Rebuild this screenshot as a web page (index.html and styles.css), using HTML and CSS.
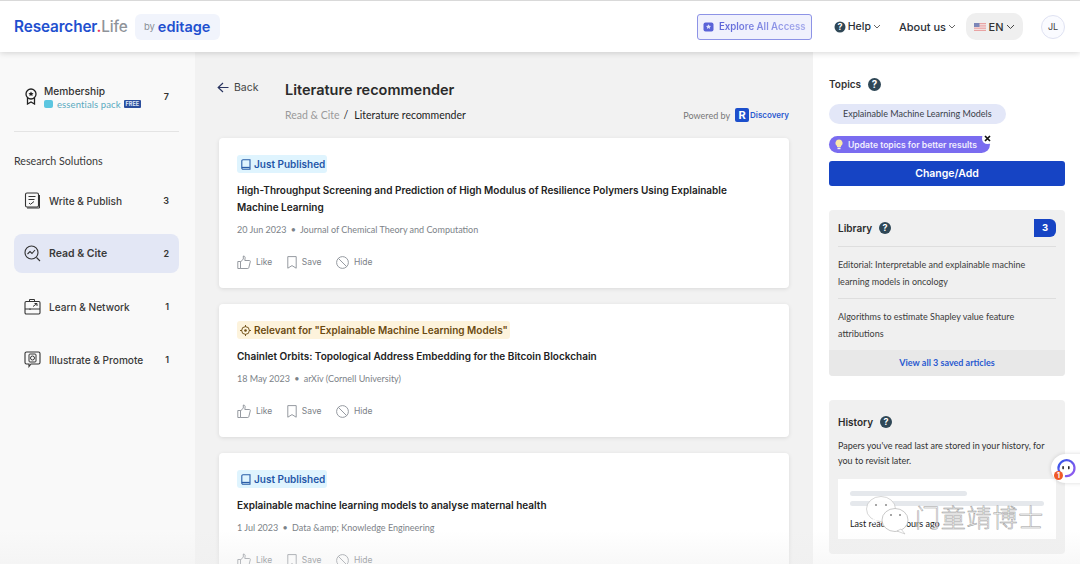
FILE: index.html
```html
<!DOCTYPE html>
<html lang="en">
<head>
<meta charset="utf-8">
<title>Literature recommender</title>
<link rel="stylesheet" href="styles.css">
</head>
<body>
<header class="topbar">
  <div class="brand">
    <span class="logo"><span class="logo-a">Researcher</span><span class="logo-dot">.</span><span class="logo-b">Life</span></span>
    <span class="by-box"><span class="by">by</span><span class="editage">editage</span></span>
  </div>
  <nav class="topnav">
    <a class="explore">
      <svg width="11" height="11" viewBox="0 0 11 11"><rect x="0.5" y="1.500" width="10" height="9" rx="2" fill="#5a63d8"/><path d="M5.500 3.200l.8 1.600 1.700.2-1.200 1.200.3 1.700-1.600-.8-1.600.8.3-1.700L3 5l1.700-.2z" fill="#dfe2fb"/></svg>
      <span class="explore-text">Explore All Access</span>
    </a>
    <a class="navlink help">
      <svg width="12" height="12" viewBox="0 0 12 12"><circle cx="6" cy="6" r="5.500" fill="#2f4756"/><text x="6" y="9" text-anchor="middle" class="qmark">?</text></svg>
      <span>Help</span>
      <svg class="chev" width="8" height="5" viewBox="0 0 8 5"><path d="M1 1l3 3 3-3" fill="none" stroke="#555" stroke-width="0.9"/></svg>
    </a>
    <a class="navlink about">
      <span>About us</span>
      <svg class="chev" width="8" height="5" viewBox="0 0 8 5"><path d="M1 1l3 3 3-3" fill="none" stroke="#555" stroke-width="0.9"/></svg>
    </a>
    <a class="lang">
      <svg width="12" height="8" viewBox="0 0 12 8"><rect width="12" height="8" fill="#e9a3a3"/><rect y="1.200" width="12" height="1.100" fill="#f4e6e6"/><rect y="3.500" width="12" height="1.100" fill="#f4e6e6"/><rect y="5.800" width="12" height="1.100" fill="#f4e6e6"/><rect width="5.500" height="4" fill="#7b86b8"/></svg>
      <span>EN</span>
      <svg width="9" height="6" viewBox="0 0 9 6"><path d="M1 1l3.500 3.500L8 1" fill="none" stroke="#444" stroke-width="1"/></svg>
    </a>
    <span class="avatar">JL</span>
  </nav>
</header>

<div class="page">
  <aside class="sidebar">
    <div class="member">
      <svg class="member-icon" width="14" height="17" viewBox="0 0 14 17"><circle cx="7" cy="6" r="5" fill="none" stroke="#222" stroke-width="1.300"/><path d="M7 3.400l.8 1.600 1.700.2-1.200 1.200.3 1.700L7 7.300l-1.600.8.3-1.700L4.500 5.200l1.700-.2z" fill="#222"/><path d="M3.500 10v6l3.500-2 3.500 2v-6" fill="none" stroke="#222" stroke-width="1.300"/></svg>
      <div class="member-text">
        <div class="member-name">Membership</div>
        <div class="member-pack"><span class="pack-dot"></span><span class="pack-name">essentials pack</span><span class="free">FREE</span></div>
      </div>
      <span class="count">7</span>
    </div>
    <div class="side-title">Research Solutions</div>
    <ul class="side-nav">
      <li class="side-item">
        <svg width="17" height="17" viewBox="0 0 17 17"><rect x="1.500" y="1" width="13" height="14" rx="1.500" fill="none" stroke="#333" stroke-width="1.100"/><path d="M15.500 3v13H3" fill="none" stroke="#333" stroke-width="1"/><path d="M4.500 4.500h7M4.500 7.500h6M5 11l1.500 1.300L10 9.500" fill="none" stroke="#333"/></svg>
        <span class="side-label">Write &amp; Publish</span><span class="count">3</span>
      </li>
      <li class="side-item active">
        <svg width="17" height="17" viewBox="0 0 17 17"><circle cx="7.500" cy="7.500" r="6.500" fill="none" stroke="#333" stroke-width="1.100"/><path d="M12.500 12.500l3.500 3.500" stroke="#333" stroke-width="1.100"/><path d="M3.500 9l2.500-2.500L8 8.500l3-3.500" fill="none" stroke="#333" stroke-width="1.100"/></svg>
        <span class="side-label">Read &amp; Cite</span><span class="count">2</span>
      </li>
      <li class="side-item">
        <svg width="17" height="17" viewBox="0 0 17 17"><rect x="1" y="3.500" width="15" height="12.500" rx="1.200" fill="none" stroke="#333" stroke-width="1.100"/><path d="M5.500 3.500V1.500h5v2M1 11h15M9 8.500l4-3M10.500 5.500H13V8M6 10.500v1.500" fill="none" stroke="#333"/></svg>
        <span class="side-label">Learn &amp; Network</span><span class="count">1</span>
      </li>
      <li class="side-item">
        <svg width="17" height="17" viewBox="0 0 17 17"><path d="M2.500 1h12A1.500 1.500 0 0 1 16 2.500v9a1.500 1.500 0 0 1-1.500 1.500H7l-2 2.500V13H2.500A1.500 1.500 0 0 1 1 11.500v-9A1.500 1.500 0 0 1 2.500 1z" fill="none" stroke="#333" stroke-width="1.100"/><rect x="5" y="3" width="7" height="8" rx="1" fill="none" stroke="#333"/><circle cx="8.500" cy="7" r="2" fill="none" stroke="#333"/></svg>
        <span class="side-label">Illustrate &amp; Promote</span><span class="count">1</span>
      </li>
    </ul>
  </aside>

  <main class="main">
    <div class="main-head">
      <a class="back">
        <svg width="12" height="11" viewBox="0 0 12 11"><path d="M6 1L1.200 5.500 6 10M1.200 5.500H11.500" fill="none" stroke="#2a3560" stroke-width="1.200"/></svg>
        <span>Back</span>
      </a>
      <div class="title-block">
        <h1>Literature recommender</h1>
        <div class="crumbs"><span class="crumb-a">Read &amp; Cite</span><span class="crumb-s">/</span><span class="crumb-b">Literature recommender</span></div>
      </div>
      <div class="powered">
        <span>Powered by</span>
        <span class="r-badge">R</span>
        <span class="disc">Discovery</span>
      </div>
    </div>

    <article class="card">
      <span class="tag tag-blue">
        <svg width="10" height="11" viewBox="0 0 10 11"><path d="M2 .8h7v9.400H2A1.200 1.200 0 0 1 .8 9V2A1.200 1.200 0 0 1 2 .8z" fill="#dff4fe" stroke="#2a5da8" stroke-width="1.100"/><path d="M.8 8.500h8" stroke="#2a5da8" stroke-width="1.300"/></svg>
        Just Published
      </span>
      <h2>High-Throughput Screening and Prediction of High Modulus of Resilience Polymers Using Explainable Machine Learning</h2>
      <p class="meta">20 Jun 2023 <i>•</i> Journal of Chemical Theory and Computation</p>
      <div class="actions">
        <span class="act"><svg width="14" height="14" viewBox="0 0 14 14"><path d="M.8 6.500h2.700v7H.8zM3.500 7l2.800-3V1c1.400 0 2 1 1.800 2.200L7.800 5.500h4.700c.7 0 1 .6.800 1.200l-1.500 6c-.1.500-.5.800-1 .8H3.500" fill="none" stroke="#8a8f96" stroke-width=".9"/></svg>Like</span>
        <span class="act"><svg width="10" height="13" viewBox="0 0 10 13"><path d="M.8.600h8.400v11.600L5 9.600.8 12.200z" fill="none" stroke="#8a8f96" stroke-width=".9"/></svg>Save</span>
        <span class="act"><svg width="13" height="13" viewBox="0 0 13 13"><circle cx="6.500" cy="6.500" r="5.900" fill="none" stroke="#8a8f96" stroke-width=".9"/><path d="M2.400 2.400l8.200 8.200" stroke="#8a8f96" stroke-width=".9"/></svg>Hide</span>
      </div>
    </article>

    <article class="card">
      <span class="tag tag-amber">
        <svg width="11" height="11" viewBox="0 0 12 12"><circle cx="6" cy="6" r="4.200" fill="none" stroke="#6b4a10"/><circle cx="6" cy="6" r="1.400" fill="#6b4a10"/><path d="M6 0v2M6 10v2M0 6h2M10 6h2" stroke="#6b4a10"/></svg>
        Relevant for "Explainable Machine Learning Models"
      </span>
      <h2>Chainlet Orbits: Topological Address Embedding for the Bitcoin Blockchain</h2>
      <p class="meta">18 May 2023 <i>•</i> arXiv (Cornell University)</p>
      <div class="actions">
        <span class="act"><svg width="14" height="14" viewBox="0 0 14 14"><path d="M.8 6.500h2.700v7H.8zM3.500 7l2.800-3V1c1.400 0 2 1 1.800 2.200L7.800 5.500h4.700c.7 0 1 .6.800 1.200l-1.500 6c-.1.500-.5.800-1 .8H3.500" fill="none" stroke="#8a8f96" stroke-width=".9"/></svg>Like</span>
        <span class="act"><svg width="10" height="13" viewBox="0 0 10 13"><path d="M.8.600h8.400v11.600L5 9.600.8 12.200z" fill="none" stroke="#8a8f96" stroke-width=".9"/></svg>Save</span>
        <span class="act"><svg width="13" height="13" viewBox="0 0 13 13"><circle cx="6.500" cy="6.500" r="5.900" fill="none" stroke="#8a8f96" stroke-width=".9"/><path d="M2.400 2.400l8.200 8.200" stroke="#8a8f96" stroke-width=".9"/></svg>Hide</span>
      </div>
    </article>

    <article class="card">
      <span class="tag tag-blue">
        <svg width="10" height="11" viewBox="0 0 10 11"><path d="M2 .8h7v9.400H2A1.200 1.200 0 0 1 .8 9V2A1.200 1.200 0 0 1 2 .8z" fill="#dff4fe" stroke="#2a5da8" stroke-width="1.100"/><path d="M.8 8.500h8" stroke="#2a5da8" stroke-width="1.300"/></svg>
        Just Published
      </span>
      <h2>Explainable machine learning models to analyse maternal health</h2>
      <p class="meta">1 Jul 2023 <i>•</i> Data &amp;amp; Knowledge Engineering</p>
      <div class="actions">
        <span class="act"><svg width="14" height="14" viewBox="0 0 14 14"><path d="M.8 6.500h2.700v7H.8zM3.500 7l2.800-3V1c1.400 0 2 1 1.800 2.200L7.800 5.500h4.700c.7 0 1 .6.800 1.200l-1.500 6c-.1.500-.5.800-1 .8H3.500" fill="none" stroke="#8a8f96" stroke-width=".9"/></svg>Like</span>
        <span class="act"><svg width="10" height="13" viewBox="0 0 10 13"><path d="M.8.600h8.400v11.600L5 9.600.8 12.200z" fill="none" stroke="#8a8f96" stroke-width=".9"/></svg>Save</span>
        <span class="act"><svg width="13" height="13" viewBox="0 0 13 13"><circle cx="6.500" cy="6.500" r="5.900" fill="none" stroke="#8a8f96" stroke-width=".9"/><path d="M2.400 2.400l8.200 8.200" stroke="#8a8f96" stroke-width=".9"/></svg>Hide</span>
      </div>
    </article>
  </main>

  <aside class="rail">
    <div class="rail-title">Topics <svg width="13" height="13" viewBox="0 0 12 12"><circle cx="6" cy="6" r="6" fill="#2f4756"/><text x="6" y="9" text-anchor="middle" class="qmark">?</text></svg></div>
    <span class="topic">Explainable Machine Learning Models</span>
    <span class="hint">
      <svg width="8" height="11" viewBox="0 0 8 11"><path d="M4 .5a3.500 3.500 0 0 1 2 6.400V8H2V6.900A3.500 3.500 0 0 1 4 .5z" fill="#fbe9a8"/><rect x="2.500" y="8.600" width="3" height="1.600" fill="#f2f2f2"/></svg>
      Update topics for better results
      <span class="hint-x"><svg width="7" height="7" viewBox="0 0 7 7"><path d="M1 1l5 5M6 1L1 6" stroke="#111" stroke-width="1.700"/></svg></span>
    </span>
    <button class="change">Change/Add</button>

    <section class="panel library">
      <div class="panel-head"><span class="panel-title">Library</span>
        <svg width="12" height="12" viewBox="0 0 12 12"><circle cx="6" cy="6" r="6" fill="#2f4756"/><text x="6" y="9" text-anchor="middle" class="qmark">?</text></svg>
        <span class="lib-count">3</span>
      </div>
      <p class="lib-item">Editorial: Interpretable and explainable machine learning models in oncology</p>
      <p class="lib-item">Algorithms to estimate Shapley value feature attributions</p>
      <a class="view-all">View all 3 saved articles</a>
    </section>

    <section class="panel history">
      <div class="panel-head"><span class="panel-title">History</span>
        <svg width="12" height="12" viewBox="0 0 12 12"><circle cx="6" cy="6" r="6" fill="#2f4756"/><text x="6" y="9" text-anchor="middle" class="qmark">?</text></svg>
      </div>
      <p class="hist-text">Papers you've read last are stored in your history, for you to revisit later.</p>
      <div class="hist-box">
        <span class="bar bar-short"></span>
        <span class="bar"></span>
        <span class="last">Last read 10 hours ago</span>
      </div>
    </section>
  </aside>
</div>

<div class="chat-fab">
  <svg width="20" height="20" viewBox="0 0 20 20"><defs><linearGradient id="ring" x1="0" y1="0" x2="1" y2="1"><stop offset="0" stop-color="#2f55e8"/><stop offset="1" stop-color="#9a5cf0"/></linearGradient></defs><path d="M3.500 14A8 8 0 1 1 9 18" fill="none" stroke="url(#ring)" stroke-width="2.200"/><rect x="6.300" y="8" width="1.600" height="3.400" rx=".8" fill="#222"/><rect x="12" y="8" width="1.600" height="3.400" rx=".8" fill="#222"/></svg>
  <span class="chat-badge">1</span>
</div>

<div class="watermark">
  <svg width="44" height="40" viewBox="0 0 44 40"><ellipse cx="15" cy="13" rx="14.500" ry="12.500" fill="#fff" fill-opacity=".9" stroke="#bbb" stroke-width=".6"/><path d="M7 23l-2 5 7-3z" fill="#fff"/><ellipse cx="29" cy="24" rx="13" ry="11.500" fill="#fff" stroke="#bbb" stroke-width=".8"/><path d="M35 33l4 5-8-3z" fill="#fff" stroke="#bbb" stroke-width=".6"/><circle cx="10" cy="9" r="1" fill="#888"/><circle cx="20" cy="9" r="1" fill="#888"/><circle cx="25" cy="19" r="1" fill="#888"/><circle cx="34" cy="19" r="1" fill="#888"/></svg>
  <span class="wm-text">门童靖博士</span>
</div>
<div class="fade"></div>
</body>
</html>
```
FILE: styles.css
```css
* { box-sizing: border-box; }
html, body { margin: 0; padding: 0; }
body {
  width: 1080px;
  height: 564px;
  overflow: hidden;
  position: relative;
  font-family: "Lato", "Liberation Sans", sans-serif;
  color: #222;
  background: #f2f2f2;
  display: flex;
  flex-direction: column;
}
h1, h2, p, ul { margin: 0; padding: 0; }
ul { list-style: none; }
.qmark { font: 700 9px "Inter", sans-serif; fill: #fff; }

.topbar {
  height: 52px;
  flex: none;
  background: #fff;
  border-top: 1px solid #d9d9d9;
  box-shadow: 0 1px 6px rgba(0,0,0,.16);
  display: flex;
  justify-content: space-between;
  align-items: center;
  padding: 0 15px 0 14px;
  position: relative;
  z-index: 2;
}
.brand { display: flex; align-items: center; gap: 7px; }
.logo { font: 600 15.300px "Inter", sans-serif; letter-spacing: -.1px; }
.logo-a { color: #1f50cf; }
.logo-dot { color: #e8365d; }
.logo-b { color: #8f9399; font-weight: 500; }
.by-box {
  width: 85px; height: 26px; border-radius: 6px; background: #f1f4fc;
  display: flex; align-items: center; justify-content: center; gap: 3px;
}
.by { font: 400 9.500px "Inter", sans-serif; color: #8a8f96; }
.editage { font: 600 14.500px "Inter", sans-serif; color: #1f50cf; }

.topnav { display: flex; align-items: center; }
.explore {
  width: 115px; height: 26px;
  border: 1px solid #8d93e6; border-radius: 3px;
  background: #f0f1fd;
  display: flex; align-items: center; justify-content: center; gap: 5px;
  margin-right: 22px;
}
.explore-text {
  font: 600 9.700px "Inter", sans-serif;
  background: linear-gradient(to right, #5a63d8, #a9aeee);
  -webkit-background-clip: text;
  background-clip: text;
  color: transparent;
}
.navlink { display: flex; align-items: center; gap: 2px; font: 500 10.500px "Inter", sans-serif; color: #2a2f36; }
.help { margin-right: 18px; }
.about { font-size: 11px; margin-right: 10px; }
.lang {
  width: 57px; height: 27px; background: #efefef; border-radius: 10px;
  display: flex; align-items: center; justify-content: center; gap: 3px;
  font: 500 11px "Inter", sans-serif; color: #333;
  margin-right: 18px;
}
.avatar {
  width: 24px; height: 24px; border-radius: 50%;
  border: 1px solid #dfe2f2; background: #fafbff;
  display: flex; align-items: center; justify-content: center;
  font: 400 9px "Inter", sans-serif; color: #444;
}

.page { flex: 1; display: flex; min-height: 0; }

.sidebar { width: 195px; flex: none; background: #f9f9f9; padding: 30px 16px 0 14px; }
.member {
  display: flex; align-items: center;
  height: 50px;
  padding: 0 10px 20px 10px;
  border-bottom: 1px solid #e4e4e4;
  margin-bottom: 22px;
}
.member-icon { margin-right: 6px; flex: none; }
.member-text { flex: 1; padding-top: 1px; }
.member-name { font: 500 10.200px "Inter", sans-serif; color: #333; line-height: 13px; }
.member-pack { display: flex; align-items: center; margin-top: 1px; height: 11px; }
.pack-dot { width: 9px; height: 8px; border-radius: 2px; background: #5cc6e0; margin-right: 4px; }
.pack-name { font: 400 9.500px "Lato", sans-serif; color: #5aa9bf; margin-right: 3px; letter-spacing: .1px; }
.free { font: 700 5.500px "Inter", sans-serif; background: #2b4e9c; color: #dfe7f7; padding: 1px 2px; border-radius: 1px; line-height: 6px; }
.count { font: 600 9px "Inter", sans-serif; color: #333; }

.side-title { font: 400 10.700px "Lato", sans-serif; color: #3a3a3a; line-height: 13px; margin-bottom: 14px; }
.side-nav { display: flex; flex-direction: column; gap: 14px; }
.side-item {
  height: 39px;
  display: flex; align-items: center;
  padding: 0 10px;
  border-radius: 8px;
}
.side-item svg { flex: none; margin-right: 8px; }
.side-item .side-label { flex: 1; font: 500 10.100px "Inter", sans-serif; color: #3a3a3a; }
.side-item.active { background: #e3e7f5; }
.side-item.active .side-label { font-size: 10.500px; font-weight: 600; }

.main { width: 618px; flex: none; padding: 0 24px 0 24px; }
.main-head { height: 86px; display: flex; align-items: flex-start; margin-left: -2px; padding-top: 26px; position: relative; }
.back { display: flex; align-items: center; gap: 5px; font: 400 10.500px "Inter", sans-serif; color: #444; height: 18px; width: 68px; flex: none; }
.title-block { flex: 1; padding-top: 1px; }
h1 { font: 600 14.500px "Inter", sans-serif; color: #2a2a2a; line-height: 22px; }
.crumbs { margin-top: 8px; font: 400 10.500px "Lato", sans-serif; display: flex; gap: 4px; line-height: 13px; }
.crumb-a { color: #9a9a9a; }
.crumb-s { color: #222; margin-right: 2px; }
.crumb-b { color: #222; }
.powered { display: flex; align-items: center; font: 400 9px "Lato", sans-serif; color: #777; margin-top: 30px; }
.r-badge {
  width: 14px; height: 14px; background: #1c4fcc; border-radius: 2px; margin: 0 1px 0 5px;
  color: #fff; font: 700 11px/14px "Inter", sans-serif; text-align: center;
}
.disc { font: 600 8px "Inter", sans-serif; color: #2a5ad0; }

.card {
  background: #fff;
  border-radius: 4px;
  box-shadow: 0 1px 4px rgba(0,0,0,.1);
  padding: 17px 18px 18px;
  margin-bottom: 16px;
}
.tag {
  display: flex; align-items: center; gap: 3px;
  width: fit-content;
  height: 18px; padding: 0 2px 0 4px;
  border-radius: 3px;
  font: 600 10px "Inter", sans-serif;
}
.tag-blue { background: #dff4fe; color: #1f56a8; }
.tag-amber { background: #fdf3dc; color: #6b4a10; padding-left: 3px; }
h2 { font: 600 10px/17px "Inter", sans-serif; color: #222; margin-top: 9px; padding-right: 30px; }
.meta { font: 400 9px/13px "Lato", sans-serif; color: #7c8288; margin-top: 7px; }
.meta i { font-style: normal; margin: 0 2px; }
.actions { display: flex; align-items: center; gap: 14.500px; margin-top: 18px; height: 16px; }
.act { display: flex; align-items: center; gap: 5px; font: 400 8.500px "Inter", sans-serif; color: #7c8288; }

.rail { width: 267px; flex: none; background: #fff; padding: 24px 15px 0 16px; position: relative; }
.rail-title { font: 600 10px/16px "Inter", sans-serif; color: #333; display: flex; align-items: center; gap: 7px; margin-bottom: 12px; }
.topic {
  display: inline-block; height: 20px; padding: 0 14px;
  background: #e3e7f8; border-radius: 10px;
  font: 400 9px/20px "Lato", sans-serif; color: #3a3f4a;
  vertical-align: top;
}
.hint {
  display: flex; align-items: center; gap: 5px;
  width: 161px; height: 17px;
  padding-left: 6px;
  margin-top: 12px;
  background: #7a6cf0; border-radius: 9px;
  font: 600 8.600px "Inter", sans-serif; color: #f1eefe;
  position: relative;
}
.hint-x {
  position: absolute; right: -3px; top: -3px;
  width: 11px; height: 11px; border-radius: 50%; background: #fff;
  display: flex; align-items: center; justify-content: center;
}
.change {
  display: block; width: 236px; height: 25px; margin-top: 8px;
  background: #1644c4; color: #fff; border: 0; border-radius: 3px;
  font: 600 10.500px "Inter", sans-serif;
}
.panel { background: #f0f0f0; border-radius: 4px; width: 236px; padding: 0 9px; }
.library { margin-top: 24px; height: 166px; position: relative; overflow: hidden; }
.panel-head { display: flex; align-items: center; gap: 7px; height: 36px; }
.panel-title { font: 600 10px "Inter", sans-serif; color: #2c2c2c; }
.lib-count {
  margin-left: auto; width: 22px; height: 18px; background: #1644c4; color: #fff;
  border-radius: 0 6px 6px 0;
  font: 700 9.500px/18px "Inter", sans-serif; text-align: center;
}
.lib-item { border-top: 1px solid #dedede; font: 400 9px/16.500px "Lato", sans-serif; color: #3c3c3c; padding: 10px 0 8px; }
.view-all {
  position: absolute; left: 0; right: 0; bottom: 0; height: 26px;
  background: #e8e8e8; text-align: center;
  font: 700 9px/26px "Lato", sans-serif; color: #2a5ad0;
}
.history { margin-top: 24px; height: 154px; background: #f0f0f0; }
.history .panel-head { height: 44px; }
.hist-text { font: 400 9px/15px "Lato", sans-serif; color: #333; margin-top: -6px; }
.hist-box {
  background: #fff; height: 60px; margin-top: 11px; padding: 12px 12px 0 12px;
  display: flex; flex-direction: column;
}
.bar { display: block; height: 5px; background: #e5e8ec; border-radius: 3px; margin-bottom: 5px; }
.bar-short { width: 117px; }
.last { font: 400 9px "Lato", sans-serif; color: #222; margin-top: 7px; }

.chat-fab {
  position: absolute; left: 1051px; top: 454px;
  width: 40px; height: 29px;
  background: #fff;
  border-radius: 15px 0 0 15px;
  box-shadow: 0 0 4px rgba(0,0,0,.15);
  padding: 4px 0 0 5px;
  z-index: 3;
}
.chat-badge {
  position: absolute; left: 3px; top: 17px;
  width: 9px; height: 9px; border-radius: 50%;
  background: #ef5a28; color: #fff;
  font: 700 7px/9px "Inter", sans-serif; text-align: center;
}
.watermark {
  position: absolute; left: 866px; top: 496px;
  display: flex; align-items: center;
  z-index: 4;
}
.wm-text {
  font: 300 25px "Noto Sans CJK SC", sans-serif;
  color: rgba(255,255,255,.8);
  -webkit-text-stroke: .5px #999;
  margin-left: 5px;
  letter-spacing: .8px;
}
.fade {
  position: absolute; left: 0; right: 0; bottom: 0; height: 34px;
  background: linear-gradient(to bottom, rgba(240,240,240,0), rgba(238,238,238,.4));
  pointer-events: none;
  z-index: 1;
}
```
